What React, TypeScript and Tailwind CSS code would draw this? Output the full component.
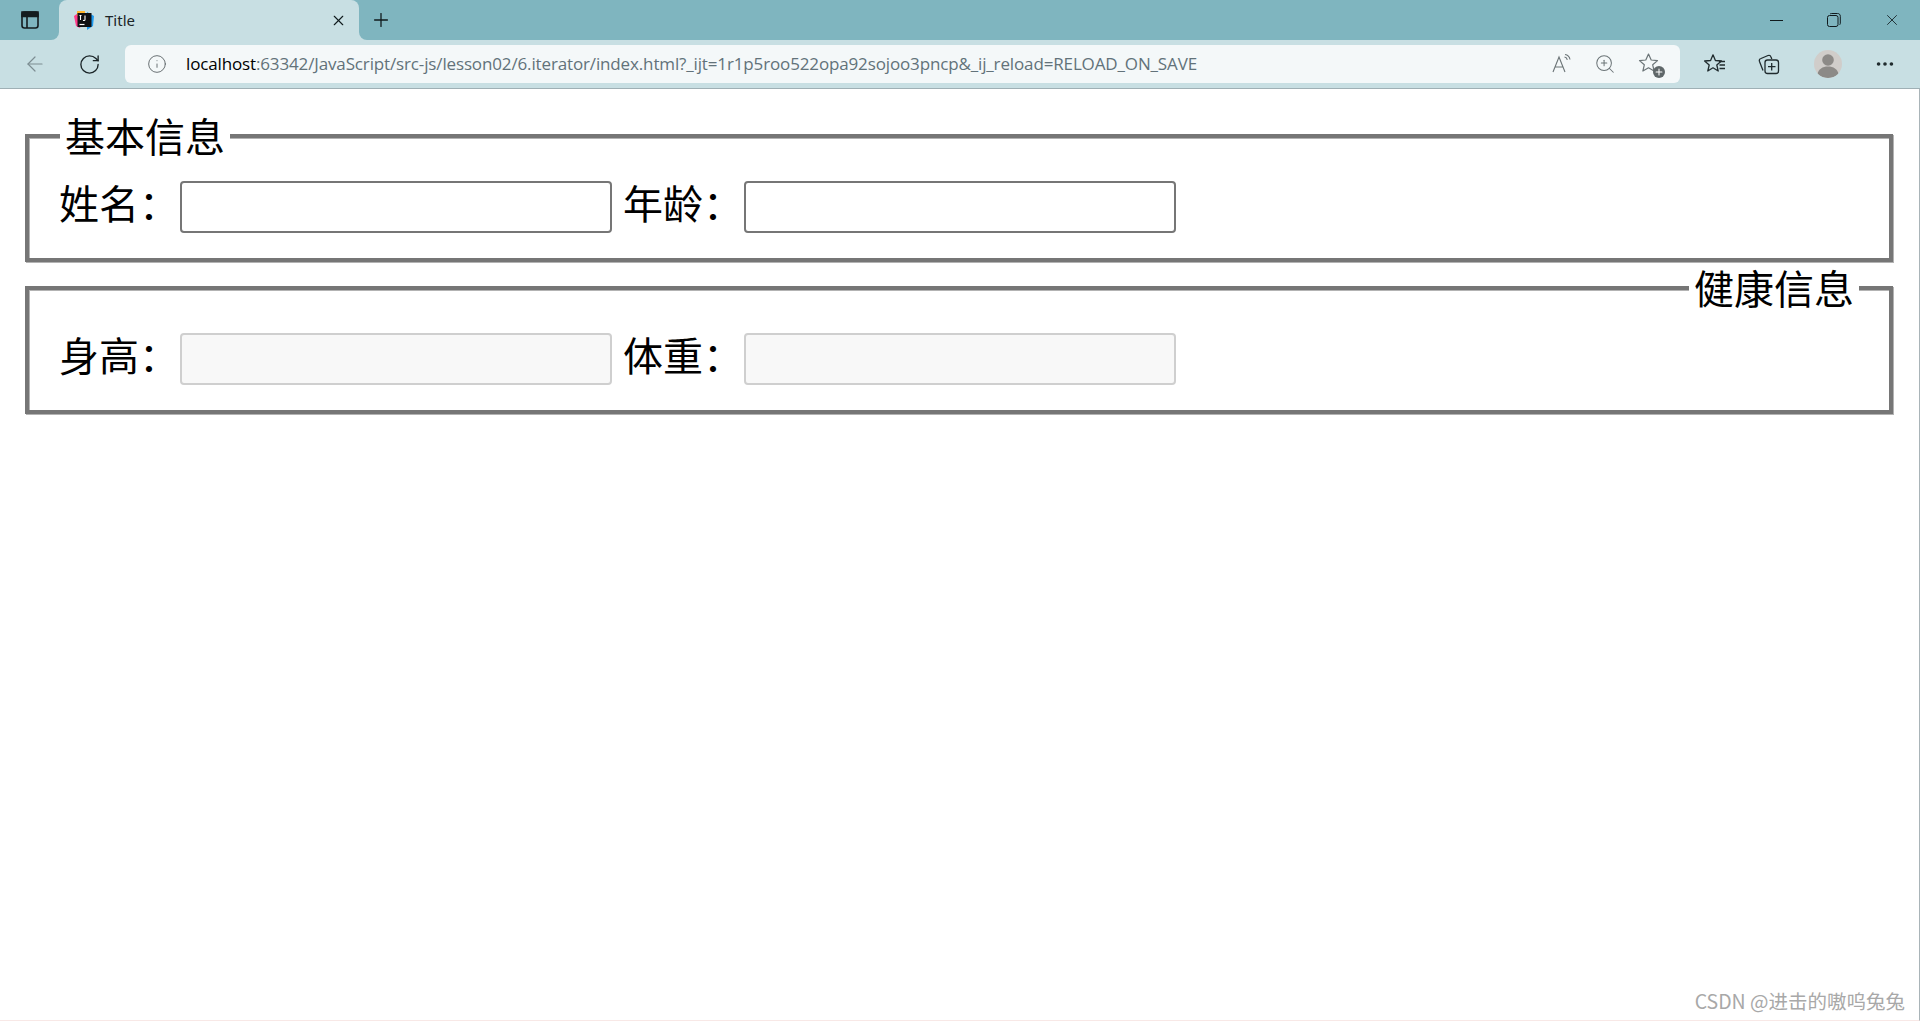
import { ArrowLeft, Info, MoreHorizontal, Plus, RotateCw, X, ZoomIn } from "lucide-react";

const cjk = "font-['Noto_Sans_CJK_SC','Liberation_Sans',sans-serif] font-normal";
const box =
  "h-[147px] border-[4px] border-solid border-[#767676] px-[30px] shadow-[1px_1px_0_#b3b3b3,inset_1px_1px_0_#b3b3b3]";

const Field = ({ label, disabled }: { label: string; disabled?: boolean }) => (
  <>
    <label className="mr-[1px] pb-[9px] text-[40px] leading-[52px] text-black">{label}</label>
    <input
      disabled={disabled}
      className={`box-border h-[52px] w-[432px] rounded-[4px] border-2 ${disabled ? "border-[#cfcfcf] bg-[#f8f8f8]" : "border-[#767676] bg-white"}`}
    />
  </>
);

const StarIcon = () => (
  <svg width="24" height="24" viewBox="0 0 24 24" fill="none" stroke="#202b2e" strokeWidth="1.3" strokeLinejoin="round">
    <path d="M10 2.800l2.400 5.700 6 .5-4.600 4 1.400 6-5.200-3.200-5.200 3.200 1.400-6-4.600-4 6-.5z" />
    <path d="M16 9.500h6M16.500 13h5.500M16.500 16.500h5.500" />
  </svg>
);

const CollectionsIcon = () => (
  <svg width="24" height="24" viewBox="0 0 24 24" fill="none" stroke="#202b2e" strokeWidth="1.3" strokeLinejoin="round">
    <path d="M6 18.500L2.500 9.500c-.5-1.500 0-2.500 1.500-3l7-3c1.500-.5 2.500 0 3 1.500l.8 2" />
    <rect x="8" y="8" width="13.500" height="13.500" rx="2.500" />
    <path d="M14.700 11v7.500M11 14.700h7.500" />
  </svg>
);

const App = () => {
  return (
    <div className="relative flex h-[1021px] w-[1920px] flex-col overflow-hidden bg-white font-['Noto_Sans','Liberation_Sans',sans-serif]">
      {/* title bar */}
      <div className="flex h-[40px] shrink-0 bg-[linear-gradient(#7fb5bf_50%,#c8dfe3_50%)]">
        <div className="flex w-[59px] items-center justify-center rounded-br-[8px] bg-[#7fb5bf]">
          <svg width="20" height="20" viewBox="0 0 20 20" fill="none" stroke="#141c1f" strokeWidth="1.6">
            <rect x="2" y="2" width="16" height="16" rx="2.500" />
            <path d="M7 6.500V18" />
            <path d="M2 2h16v4.500H2z" fill="#141c1f" />
          </svg>
        </div>
        <div className="flex h-[40px] w-[300px] items-center rounded-t-[8px] bg-[#c8dfe3] pl-[14px] pr-[12px]">
          <svg width="22" height="22" viewBox="0 0 22 22" className="shrink-0">
            <path d="M1 7l7-5 3 5-4 12-4-2z" fill="#ff3d8b" />
            <path d="M4 2h8v5H4z" fill="#ffb52e" />
            <path d="M14 3l7 4-1 10-6 4z" fill="#1e9bf0" />
            <rect x="4.500" y="4" width="14" height="14" fill="#101014" />
            <path d="M6.500 15.500h5" stroke="#fff" strokeWidth="1.200" />
            <path d="M7.500 6.500v4.500M6.500 6.500h2M12 6.500v4c0 1-1 1.200-2 .9" stroke="#fff" strokeWidth="1.100" fill="none" />
          </svg>
          <span className="ml-[10px] flex-1 text-[15px] leading-[34px] text-[#1b2528]">Title</span>
          <X size={17} strokeWidth={1.6} color="#101a1d" />
        </div>
        <div className="flex flex-1 items-center rounded-bl-[8px] bg-[#7fb5bf]">
          <div className="flex w-[44px] justify-center">
            <Plus size={22} strokeWidth={1.4} color="#101a1d" />
          </div>
          <div className="ml-auto flex items-center">
            <div className="flex w-[57px] justify-center">
              <div className="h-[1px] w-[13px] bg-[#101a1d]" />
            </div>
            <div className="flex w-[58px] justify-center">
              <svg width="14" height="14" viewBox="0 0 14 14" fill="none" stroke="#101a1d" strokeWidth="1">
                <rect x="0.500" y="2.500" width="10.500" height="11" rx="2" />
                <path d="M3 1.200c.3-.5.8-.7 1.500-.7h6c1.700 0 2.800 1 2.800 2.800v7c0 .7-.3 1.200-.8 1.500" />
              </svg>
            </div>
            <div className="flex w-[57px] justify-center">
              <X size={18} strokeWidth={1.1} color="#101a1d" />
            </div>
          </div>
        </div>
      </div>

      {/* toolbar */}
      <div className="flex h-[49px] shrink-0 items-center border-b border-[#9fb0b5] bg-[#c8dfe3]">
        <div className="flex w-[70px] justify-center">
          <ArrowLeft size={24} strokeWidth={1.2} color="#7d8d92" />
        </div>
        <div className="flex w-[38px] justify-center">
          <RotateCw size={23} strokeWidth={1.4} color="#1a2427" />
        </div>
        <div className="ml-[17px] flex h-[38px] w-[1555px] items-center rounded-[6px] bg-[#f4f8f9] pl-[22px] pr-[18px]">
          <Info size={20} strokeWidth={1.1} color="#5d6568" />
          <span className="ml-[19px] flex-1 whitespace-nowrap font-['Open_Sans','Noto_Sans',sans-serif] text-[17px] tracking-[-0.14px] text-[#62727a]">
            <span className="text-black">localhost</span>:63342/JavaScript/src-js/lesson02/6.iterator/index.html?_ijt=1r1p5roo522opa92sojoo3pncp&amp;_ij_reload=RELOAD_ON_SAVE
          </span>
          <svg width="22" height="22" viewBox="0 0 22 22" fill="none" stroke="#6b7477" strokeWidth="1.100" className="mr-[-3px]">
            <path d="M2 19L8 4l6 15M4.500 14h7" />
            <path d="M13.500 4c1.500.3 2.500 1.200 2.800 2.800M14 1.500c2.800.4 4.500 2.200 5 5" />
          </svg>
          <ZoomIn size={22} strokeWidth={1.1} color="#6b7477" className="ml-[24px]" />
          <div className="relative ml-[22px] h-[24px] w-[24px]">
            <svg width="24" height="24" viewBox="0 0 24 24" fill="none" stroke="#6b7477" strokeWidth="1.200" strokeLinejoin="round">
              <path d="M10.500 2l2.700 6 6.300.6-4.800 4.200 1.400 6.200-5.600-3.200-5.600 3.200 1.400-6.200L1.500 8.600l6.300-.6z" />
            </svg>
            <div className="absolute bottom-[-2px] right-[-3px] flex h-[12px] w-[12px] items-center justify-center rounded-full bg-[#5f6769]">
              <Plus size={10} strokeWidth={2.5} color="#fff" />
            </div>
          </div>
        </div>
        <div className="ml-[23px] flex items-center">
          <StarIcon />
          <div className="ml-[30px]">
            <CollectionsIcon />
          </div>
          <div className="ml-[33px] flex h-[28px] w-[28px] items-end justify-center overflow-hidden rounded-full bg-[#d0cdca]">
            <svg width="28" height="28" viewBox="0 0 28 28" fill="#8c8a87">
              <circle cx="14" cy="10" r="5.800" />
              <path d="M3.500 24c1-5 5-7.500 10.500-7.500S23.500 19 24.500 24c-3 3-7 4-10.500 4s-7.500-1-10.500-4z" />
            </svg>
          </div>
          <div className="ml-[32px]">
            <MoreHorizontal size={22} strokeWidth={2} color="#202b2e" />
          </div>
        </div>
      </div>

      {/* page */}
      <div className={`flex flex-1 flex-col gap-[5px] border-b border-r border-b-[#f8e8e6] border-r-[#a9b4b8] pl-[25px] pr-[26px] pt-[26px] ${cjk}`}>
        <fieldset className={box}>
          <legend className="relative ml-[1px] bg-white px-[5px] pb-[2px] text-[40px] leading-[40px] text-black">基本信息</legend>
          <div className="mt-[19px] flex items-center">
            <Field label="姓名：" />
            <span className="w-[11px]" />
            <Field label="年龄：" />
          </div>
        </fieldset>
        <fieldset className={box}>
          <legend className="relative ml-auto mr-0 bg-white px-[5px] pb-[2px] text-[40px] leading-[40px] text-black">健康信息</legend>
          <div className="mt-[19px] flex items-center">
            <Field label="身高：" disabled />
            <span className="w-[11px]" />
            <Field label="体重：" disabled />
          </div>
        </fieldset>
      </div>

      <span className={`absolute bottom-[6px] right-[15px] text-[19.500px] text-[#a8a8a8] ${cjk}`}>CSDN @进击的嗷呜兔兔</span>
    </div>
  );
};

export default App;
